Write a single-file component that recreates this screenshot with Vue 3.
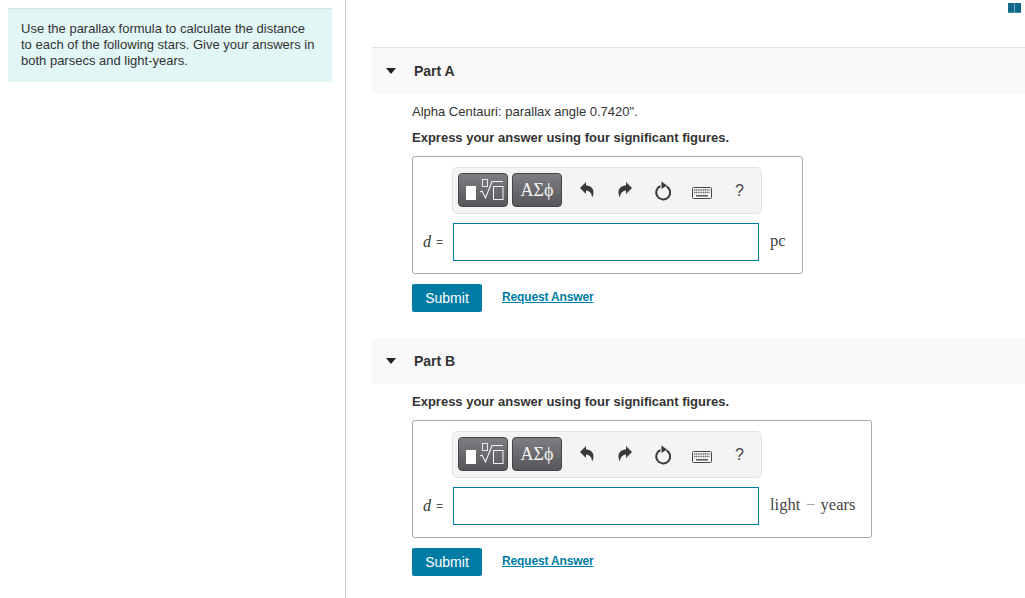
<template>
  <div class="page">
    <aside class="left">
      <div class="intro">
        Use the parallax formula to calculate the distance to each of the following stars. Give your answers in both parsecs and light-years.
      </div>
    </aside>

    <main class="right">
      <div class="top-bar">
        <svg class="book" width="13" height="10" viewBox="0 0 13 10">
          <rect width="13" height="10" fill="#6fa6bc" />
          <rect x="0" y="0" width="6" height="9.500" fill="#0f6a8b" />
          <rect x="7" y="0" width="6" height="9.500" fill="#0f6a8b" />
        </svg>
      </div>

      <section v-for="part in parts" :key="part.name" class="part" :class="part.cls">
        <header class="part-head">
          <span class="caret"></span>
          <span class="part-name">{{ part.name }}</span>
        </header>
        <div class="part-body">
          <p v-if="part.prompt" class="prompt">{{ part.prompt }}</p>
          <p class="instr">Express your answer using four significant figures.</p>

          <div class="answer-box">
            <div class="toolbar">
              <button class="tpl-btn">
                <svg width="50" height="34" viewBox="0 0 50 34" fill="none">
                  <rect x="8" y="13" width="10" height="14" fill="#fff" />
                  <rect x="24.500" y="6.500" width="5" height="7" stroke="#e8e8e8" stroke-width="1" />
                  <path d="M22 19 L24 18 L27.500 25 L34 8.500 H45" stroke="#f2f2f2" stroke-width="1.100" />
                  <rect x="35.500" y="13.500" width="9.500" height="13" stroke="#f2f2f2" stroke-width="1" />
                </svg>
              </button>
              <button class="tpl-btn greek">ΑΣϕ</button>
              <div class="tools">
                <svg class="tool undo" width="14" height="16" viewBox="0 0 14 16"><path d="M0 6 L6 0 V3.500 C10 3.500 13.500 6 13.500 10 C13.500 12 13 14 12 15.500 C12 12 10 8.800 6 8.500 V12 Z" fill="#3a3a3a" /></svg>
                <svg class="tool redo" width="14" height="16" viewBox="0 0 14 16"><path d="M14 6 L8 0 V3.500 C4 3.500 0.500 6 0.500 10 C0.500 12 1 14 2 15.500 C2 12 4 8.800 8 8.500 V12 Z" fill="#3a3a3a" /></svg>
                <svg class="tool reset" width="18" height="20" viewBox="0 0 18 20" fill="none"><path d="M6.500 5 A7 7 0 1 0 12.500 5.300" stroke="#3a3a3a" stroke-width="2" /><path d="M7.500 0.500 L13 4.500 L7.500 8 Z" fill="#3a3a3a" /></svg>
                <svg class="tool keys" width="20" height="12" viewBox="0 0 20 12"><rect x="0.500" y="0.500" width="19" height="11" rx="1" fill="#f6f6f6" stroke="#444" /><path d="M2 3 H18 M2 5.500 H18" stroke="#666" stroke-width="1.300" stroke-dasharray="1.200 0.600" /><path d="M4 8.800 H16" stroke="#555" stroke-width="1.500" /></svg>
                <span class="help">?</span>
              </div>
            </div>
            <div class="answer-row">
              <span class="label"><i>d</i><span class="eq">=</span></span>
              <input class="answer-input" type="text" />
              <span class="unit">
                <template v-for="(bit, i) in part.unit" :key="i">
                  <span :class="{ minus: bit === '−' }">{{ bit }}</span>
                </template>
              </span>
            </div>
          </div>

          <div class="actions">
            <button class="submit">Submit</button>
            <a class="request" href="#">Request Answer</a>
          </div>
        </div>
      </section>
    </main>
  </div>
</template>

<script setup>
const parts = [
  { name: 'Part A', cls: 'part-a', prompt: 'Alpha Centauri: parallax angle 0.7420".', unit: ['pc'] },
  { name: 'Part B', cls: 'part-b', prompt: '', unit: ['light', '−', 'years'] }
]
</script>

<style>
html, body { margin: 0; background: #fff; overflow: hidden; }
</style>

<style scoped>
.page {
  display: flex;
  width: 1025px;
  height: 598px;
  overflow: hidden;
  font-family: "Liberation Sans", Arial, sans-serif;
  font-size: 13px;
  color: #333;
}
.left {
  width: 324px;
  height: 598px;
  flex: none;
  border-right: 1px solid #c6ccd6;
  padding: 8px 13px 0 8px;
  box-sizing: content-box;
}
.intro {
  background: #e2f6f6;
  border-top: 1px solid #d9dfe4;
  padding: 12px 13px 13px;
  line-height: 16px;
  height: 48px;
}
.right {
  flex: 1;
  padding-left: 26px;
  min-width: 0;
}
.top-bar {
  height: 47px;
  display: flex;
  justify-content: flex-end;
  align-items: flex-start;
}
.book { margin-top: 3px; margin-right: 4px; }
.part-head {
  height: 46px;
  display: flex;
  align-items: center;
  background: #f9f9f9;
  padding-left: 14px;
}
.part-a .part-head { border-top: 1px solid #e0e0e0; }
.caret {
  width: 0;
  height: 0;
  border-left: 5.500px solid transparent;
  border-right: 5.500px solid transparent;
  border-top: 6px solid #222;
}
.part-name {
  margin-top: -1px;
  margin-left: 18px;
  font-size: 14px;
  font-weight: bold;
  color: #333;
}
.part-body { padding: 10px 0 0 40px; }
.part-b { margin-top: 26px; }
p { margin: 0; line-height: 16px; }
.prompt { margin-bottom: 10px; }
.instr { font-weight: bold; margin-bottom: 10px; }
.answer-box {
  display: inline-block;
  border: 1px solid #aaa;
  border-radius: 3px;
  padding: 10px 16px 12px 0;
  box-sizing: border-box;
  vertical-align: top;
}
.toolbar {
  margin-left: 39px;
  width: 310px;
  height: 47px;
  box-sizing: border-box;
  background: #f4f4f4;
  border: 1px solid #e3e3e3;
  border-radius: 5px;
  display: flex;
  align-items: center;
  padding-left: 5px;
  gap: 4px;
}
.tpl-btn {
  height: 34px;
  box-sizing: border-box;
  border: 1px solid #444;
  border-radius: 4px;
  background: linear-gradient(#7e7e82, #57575b);
  color: #f2f2f2;
  padding: 0;
  display: flex;
  align-items: center;
  justify-content: center;
  width: 50px;
  margin-bottom: 1px;
}
.tpl-btn svg { flex: none; margin: -1px; }
.greek {
  font-family: "Liberation Serif", "DejaVu Serif", serif;
  font-size: 18px;
}
.tools {
  display: flex;
  align-items: center;
  margin-left: 14px;
}
.tool { flex: none; }
.undo { margin-right: 24px; margin-bottom: 1px; }
.redo { margin-right: 22px; margin-bottom: 1px; }
.reset { margin-right: 20px; margin-top: 1px; }
.keys { margin-right: 23px; margin-top: 4px; }
.help { font-size: 16px; color: #444; }
.answer-row {
  display: flex;
  align-items: center;
  margin-top: 9px;
}
.label {
  width: 40px;
  box-sizing: border-box;
  padding-right: 10px;
  font-family: "Liberation Serif", "DejaVu Serif", serif;
  font-size: 16px;
  display: flex;
  justify-content: flex-end;
  align-items: center;
  gap: 5px;
}
.eq {
  font-family: "Liberation Sans", Arial, sans-serif;
  font-size: 12px;
  color: #555;
}
.answer-input {
  width: 306px;
  height: 38px;
  box-sizing: border-box;
  border: 1px solid #007da5;
  border-radius: 0;
  outline: none;
  padding: 0 4px;
  margin: 0;
}
.unit {
  margin-left: 11px;
  font-family: "Liberation Serif", "DejaVu Serif", serif;
  font-size: 16.500px;
  color: #444;
  margin-top: -2px;
  display: flex;
  gap: 5.500px;
}
.minus { color: #999; }
.actions {
  margin-top: 10px;
  display: flex;
  align-items: center;
}
.submit {
  width: 70px;
  height: 28px;
  border: none;
  border-radius: 2px;
  background: #007ca5;
  color: #fff;
  font-family: inherit;
  font-size: 14px;
  padding: 0;
}
.request {
  margin-left: 20px;
  color: #007da5;
  font-size: 12px;
  font-weight: bold;
  letter-spacing: -0.150px;
  text-decoration: underline;
  margin-top: -2px;
}
</style>
